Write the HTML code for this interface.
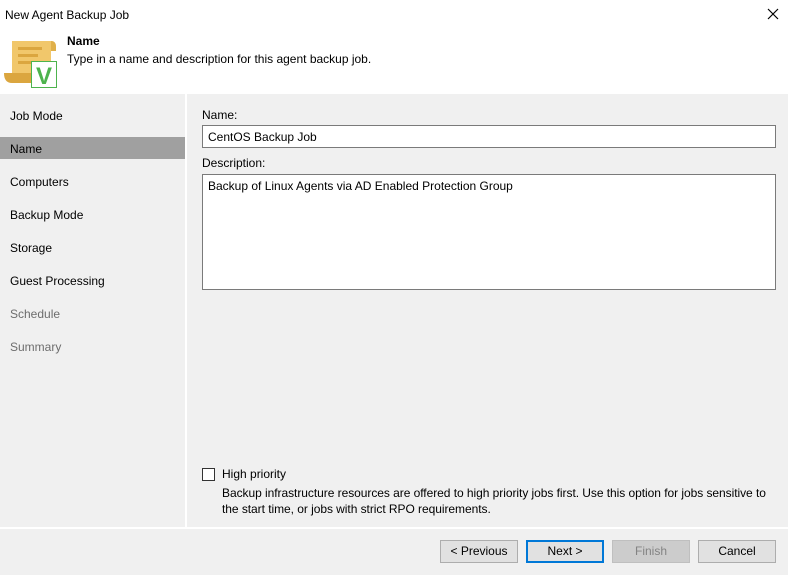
<!DOCTYPE html>
<html><head><style>
*{margin:0;padding:0;box-sizing:border-box}
body{width:788px;height:575px;background:#f0f0f0;font-family:"Liberation Sans",sans-serif;font-size:12px;color:#000;position:relative;overflow:hidden}
.a{position:absolute;white-space:nowrap}
.hdr{position:absolute;left:0;top:0;width:788px;height:94px;background:#fff}
.nav{position:absolute;left:10px;font-size:12px}
.btn{position:absolute;top:540px;width:78px;height:23px;border:1px solid #adadad;background:#e1e1e1;text-align:center;line-height:21px}
</style></head><body>
<div class="hdr"></div>
<div class="a" style="left:5px;top:8px">New Agent Backup Job</div>
<svg class="a" style="left:767px;top:8px" width="12" height="12"><path d="M1 1L11 11M11 1L1 11" stroke="#000" stroke-width="1.2"/></svg>
<svg class="a" style="left:2px;top:38px" width="56" height="52" viewBox="0 0 56 52">
<path d="M10 3 H49 Q54 3 54 9 V13 H49 V43 H10 Z" fill="#f1c76b"/>
<path d="M49 3 Q54 3 54 9 V13 H49 Z" fill="#e0b04a"/>
<path d="M2 35 Q2 45 10 45 H40 V35 Z" fill="#dba63f"/>
<rect x="16" y="9" width="24" height="3" fill="#dba63f"/>
<rect x="16" y="16" width="20" height="3" fill="#dba63f"/>
<rect x="16" y="23" width="20" height="3" fill="#dba63f"/>
<rect x="29.5" y="23.5" width="25" height="26" fill="#fff" stroke="#4db34d" stroke-width="1"/>
<text x="42" y="46" text-anchor="middle" font-family="Liberation Sans" font-weight="bold" font-size="24" fill="#4db34d">V</text>
</svg>
<div class="a" style="left:67px;top:34px;font-weight:bold">Name</div>
<div class="a" style="left:67px;top:52px">Type in a name and description for this agent backup job.</div>
<div class="a" style="left:185px;top:94px;width:2px;height:434px;background:#fff"></div>
<div class="a" style="left:0;top:527px;width:788px;height:2px;background:#fff"></div>
<div class="a" style="left:0;top:137px;width:185px;height:22px;background:#a0a0a0"></div>
<div class="a nav" style="top:109px">Job Mode</div>
<div class="a nav" style="top:142px">Name</div>
<div class="a nav" style="top:175px">Computers</div>
<div class="a nav" style="top:208px">Backup Mode</div>
<div class="a nav" style="top:241px">Storage</div>
<div class="a nav" style="top:274px">Guest Processing</div>
<div class="a nav" style="top:307px;color:#6d6d6d">Schedule</div>
<div class="a nav" style="top:340px;color:#6d6d6d">Summary</div>
<div class="a" style="left:202px;top:108px">Name:</div>
<div class="a" style="left:202px;top:125px;width:574px;height:23px;border:1px solid #7a7a7a;background:#fff;padding:4px 5px">CentOS Backup Job</div>
<div class="a" style="left:202px;top:156px">Description:</div>
<div class="a" style="left:202px;top:174px;width:574px;height:116px;border:1px solid #7a7a7a;background:#fff;padding:4px 5px">Backup of Linux Agents via AD Enabled Protection Group</div>
<div class="a" style="left:202px;top:468px;width:13px;height:13px;border:1px solid #333;background:#fff"></div>
<div class="a" style="left:222px;top:467px">High priority</div>
<div class="a" style="left:222px;top:485px;line-height:16px;letter-spacing:-0.05px">Backup infrastructure resources are offered to high priority jobs first. Use this option for jobs sensitive to<br>the start time, or jobs with strict RPO requirements.</div>
<div class="btn" style="left:440px">&lt; Previous</div>
<div class="btn" style="left:526px;border:2px solid #0078d7;line-height:19px">Next &gt;</div>
<div class="btn" style="left:612px;background:#cccccc;border-color:#bfbfbf;color:#838383">Finish</div>
<div class="btn" style="left:698px">Cancel</div>
</body></html>
